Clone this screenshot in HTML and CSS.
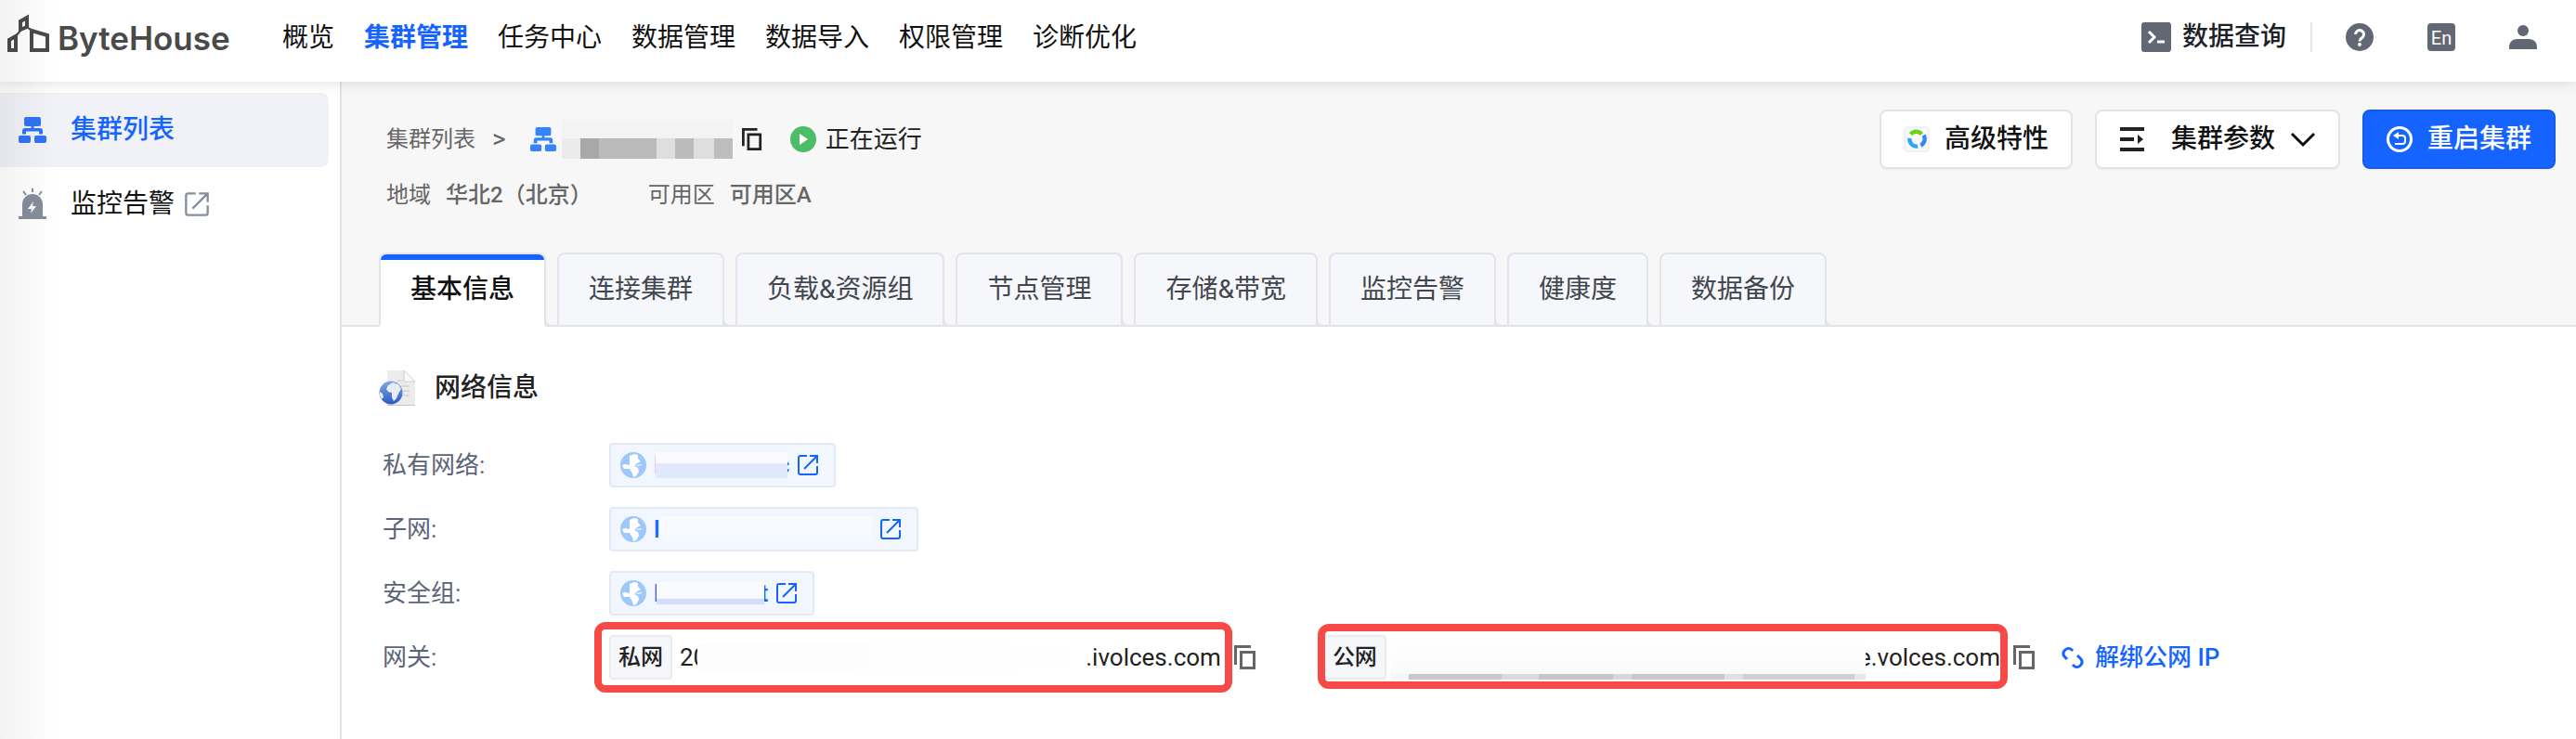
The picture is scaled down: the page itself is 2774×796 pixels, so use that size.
FILE: index.html
```html
<!DOCTYPE html>
<html lang="zh-CN">
<head>
  <meta charset="UTF-8">
  <meta name="viewport" content="width=device-width, initial-scale=1.0">
  <title>ByteHouse</title>
  <link rel="stylesheet" href="styles.css">
</head>
<body>
  <svg class="sprite" aria-hidden="true">
    <symbol id="i-cluster" viewBox="0 0 30 30">
      <rect x="6" y="1" width="18" height="10" rx="2"/>
      <path d="M13.500 10h3v3h6.500a3 3 0 0 1 3 3v3.500h-4V16.500H8v3H4V16a3 3 0 0 1 3-3h6.500z"/>
      <rect x="0" y="21" width="13" height="8" rx="2"/>
      <rect x="17" y="21" width="13" height="8" rx="2"/>
    </symbol>
    <symbol id="i-external" viewBox="0 0 24 24">
      <path d="M11 2H4a2 2 0 0 0-2 2v16a2 2 0 0 0 2 2h16a2 2 0 0 0 2-2v-7M14 2h8v8M22 2 8 16" fill="none" stroke="currentColor" stroke-width="2"/>
    </symbol>
    <symbol id="i-copy" viewBox="0 0 24 26">
      <path d="M1.500 21V1.500H18" fill="none" stroke="currentColor" stroke-width="3"/>
      <path d="M7.500 7.500h14v17h-14z" fill="none" stroke="currentColor" stroke-width="3"/>
    </symbol>
    <symbol id="i-globe" viewBox="0 0 28 28">
      <circle cx="14" cy="14" r="14" fill="#9fc8fa"/>
      <path d="M10 4l5-2 4 1v4l3 3-4 2-3 3 4 2 1 4-3 5-3 1-1-4-3-5-6 0-2-4 3-1 5 1v-5z" fill="#fff"/>
      <path d="M17 14l6-1v1l-5 1z" fill="#fff"/>
    </symbol>
  </svg>

  <header class="topbar">
    <a class="logo" href="#">
      <svg width="48" height="50" viewBox="0 0 48 50" fill="none" stroke="#4a4a4a" stroke-width="4">
        <path d="M16 21v-9l7-4v10z"/>
        <path d="M28 43V22l17 5v16z"/>
        <path d="M4 43V32l7-4v15z"/>
        <path d="M11 28l5-6M23 18l5 4" stroke-width="2"/>
      </svg>
      <span>ByteHouse</span>
    </a>
    <nav class="nav">
      <a href="#">概览</a>
      <a class="active" href="#">集群管理</a>
      <a href="#">任务中心</a>
      <a href="#">数据管理</a>
      <a href="#">数据导入</a>
      <a href="#">权限管理</a>
      <a href="#">诊断优化</a>
    </nav>
    <div class="tools">
      <a class="query" href="#">
        <svg width="32" height="32" viewBox="0 0 32 32">
          <rect width="32" height="32" rx="3" fill="#616773"/>
          <path d="M8 10l6 6-6 6" fill="none" stroke="#fff" stroke-width="3"/>
          <path d="M17 21h8" stroke="#fff" stroke-width="3"/>
        </svg>
        数据查询
      </a>
      <button class="icon-btn" aria-label="帮助">
        <svg width="30" height="30" viewBox="0 0 30 30">
          <circle cx="15" cy="15" r="15" fill="#616773"/>
          <path d="M10.500 12a4.500 4.500 0 1 1 7 3.800c-1.700 1.200-2.500 1.800-2.500 3.700" fill="none" stroke="#fff" stroke-width="3"/>
          <circle cx="15" cy="23" r="2" fill="#fff"/>
        </svg>
      </button>
      <button class="icon-btn"><span class="lang">En</span></button>
      <button class="icon-btn" aria-label="用户">
        <svg width="30" height="28" viewBox="0 0 30 28" fill="#616773">
          <circle cx="15" cy="7" r="6"/>
          <path d="M0 27v-2c0-6 4-9 9-9h12c5 0 9 3 9 9v2z"/>
        </svg>
      </button>
    </div>
  </header>

  <div class="layout">
    <aside class="sidebar">
      <a class="side-item active" href="#">
        <svg class="side-icon" width="30" height="30"><use href="#i-cluster"/></svg>
        集群列表
      </a>
      <a class="side-item" href="#">
        <svg class="side-icon" width="30" height="34" viewBox="0 0 30 34">
          <path d="M4 30V17a11 11 0 0 1 22 0v13h4v3H0v-3z"/>
          <path d="M15 0v4M5 3l3 4M25 3l-3 4" stroke="#868e9b" stroke-width="2"/>
          <path d="M16 14l-6 8h4l-1 5 6-8h-4z" fill="#fff"/>
        </svg>
        监控告警
        <svg class="side-ext" width="28" height="28"><use href="#i-external"/></svg>
      </a>
    </aside>

    <main class="main">
      <section class="page-head">
        <div class="head-row">
          <div>
            <div class="crumbs">
              <a class="crumb" href="#">集群列表</a>
              <span class="sep">&gt;</span>
              <svg class="cluster-icon" width="28" height="28"><use href="#i-cluster"/></svg>
              <span class="mask mask-name"></span>
              <button class="copy dark" aria-label="复制"><svg width="22" height="24"><use href="#i-copy"/></svg></button>
              <span class="status">
                <svg width="28" height="28" viewBox="0 0 28 28">
                  <circle cx="14" cy="14" r="14" fill="#4dbd68"/>
                  <path d="M10 8l9 6-9 6z" fill="#fff"/>
                </svg>
                正在运行
              </span>
            </div>
            <dl class="meta">
              <dt>地域</dt><dd>华北2（北京）</dd>
              <dt>可用区</dt><dd>可用区A</dd>
            </dl>
          </div>
          <div class="actions">
            <button class="btn">
              <svg width="28" height="28" viewBox="0 0 26 26">
                <rect x="1" y="1" width="24" height="24" rx="3" fill="#f8f8fa" stroke="#e6e7ea"/>
                <g fill="none" stroke-width="4">
                  <path d="M7 8a7 7 0 0 1 11 0" stroke="#6bd413"/>
                  <path d="M20 9a7 7 0 0 1-3 10" stroke="#2f86f6"/>
                  <path d="M6 12a7 7 0 0 0 8 8" stroke="#25a8f5"/>
                </g>
              </svg>
              高级特性
            </button>
            <button class="btn btn-menu">
              <svg width="28" height="28" viewBox="0 0 28 28" fill="#222">
                <path d="M1 1h26v4H1zM1 12h15v4H1zM1 23h26v4H1zM20 9l6 5-6 5z"/>
              </svg>
              集群参数
              <svg class="chevron" width="28" height="18" viewBox="0 0 28 18"><path d="M2 3l12 12L26 3" fill="none" stroke="#111" stroke-width="3"/></svg>
            </button>
            <button class="btn btn-primary">
              <svg width="28" height="28" viewBox="0 0 28 28" fill="none" stroke="#fff">
                <circle cx="14" cy="14" r="12.500" stroke-width="3"/>
                <path d="M9 10h8a3 3 0 0 1 3 3v3a3 3 0 0 1-3 3H9" stroke-width="2"/>
                <path d="M7 10l6-4v8z" fill="#fff" stroke="none"/>
              </svg>
              重启集群
            </button>
          </div>
        </div>

        <div class="tabs" role="tablist">
          <button class="tab active" role="tab" aria-selected="true">基本信息</button>
          <button class="tab" role="tab">连接集群</button>
          <button class="tab" role="tab">负载&amp;资源组</button>
          <button class="tab" role="tab">节点管理</button>
          <button class="tab" role="tab">存储&amp;带宽</button>
          <button class="tab" role="tab">监控告警</button>
          <button class="tab" role="tab">健康度</button>
          <button class="tab" role="tab">数据备份</button>
        </div>
      </section>

      <section class="content">
        <h2 class="title">
          <svg width="40" height="40" viewBox="0 0 40 40">
            <defs>
              <linearGradient id="ball" x1="0" y1="0" x2="0" y2="1"><stop offset="0" stop-color="#7fa8e6"/><stop offset="1" stop-color="#2a5cc0"/></linearGradient>
            </defs>
            <path d="M9 1h18l12 12v25H9z" fill="#ececec"/>
            <path d="M9 38h30v1H9z" fill="#c4c4c4"/>
            <path d="M27 1l12 12H27z" fill="#fafafa" stroke="#cfcfcf"/>
            <path d="M20 12h5M20 18h13M20 23h13M20 28h13" stroke="#dadada" stroke-width="2"/>
            <circle cx="13" cy="25" r="12.500" fill="url(#ball)"/>
            <path d="M10 17l5-3 6 2 3 5-3 5-2 5-3 3-2-4v-5l-4-1-2-3z" fill="#e8edf5"/>
            <path d="M1 24l3 2 1 4-2 2-2-4z" fill="#e8edf5"/>
          </svg>
          网络信息
        </h2>

        <dl class="info">
          <dt>私有网络:</dt>
          <dd>
            <a class="chip" href="#">
              <svg width="28" height="28"><use href="#i-globe"/></svg>
              <span class="masked">l<span class="mask mask-vpc"></span>c</span>
              <svg class="ext" width="24" height="24"><use href="#i-external"/></svg>
            </a>
          </dd>
          <dt>子网:</dt>
          <dd>
            <a class="chip" href="#">
              <svg width="28" height="28"><use href="#i-globe"/></svg>
              <span class="masked">l<span class="mask mask-subnet"></span></span>
              <svg class="ext" width="24" height="24"><use href="#i-external"/></svg>
            </a>
          </dd>
          <dt>安全组:</dt>
          <dd>
            <a class="chip" href="#">
              <svg width="28" height="28"><use href="#i-globe"/></svg>
              <span class="masked">b<span class="mask mask-group"></span>t</span>
              <svg class="ext" width="24" height="24"><use href="#i-external"/></svg>
            </a>
          </dd>
          <dt>网关:</dt>
          <dd class="gateways">
            <span class="address private">
              <span class="tag">私网</span>
              <span class="host">20<span class="mask mask-private"></span>.ivolces.com</span>
            </span>
            <button class="copy" aria-label="复制私网地址"><svg width="24" height="26"><use href="#i-copy"/></svg></button>
            <span class="address public">
              <span class="tag">公网</span>
              <span class="host"><span class="mask mask-public"></span>e.volces.com</span>
            </span>
            <button class="copy" aria-label="复制公网地址"><svg width="24" height="26"><use href="#i-copy"/></svg></button>
            <a class="unbind" href="#">
              <svg width="24" height="24" viewBox="0 0 24 24" fill="none" stroke="currentColor" stroke-width="3">
                <path d="M12 5l-1-1a5 5 0 0 0-7 0L3 5a5 5 0 0 0 0 6l3 3"/>
                <path d="M12 20l1 1a5 5 0 0 0 7 0l1-1a5 5 0 0 0 0-6l-4-4"/>
              </svg>
              解绑公网 IP
            </a>
          </dd>
        </dl>
      </section>
    </main>
  </div>
</body>
</html>
```

FILE: styles.css
```css
* {
  box-sizing: border-box;
}
body {
  margin: 0;
  min-height: 100vh;
  display: flex;
  flex-direction: column;
  font-family: Roboto, "Noto Sans CJK SC", sans-serif;
  font-size: 26px;
  line-height: 40px;
  color: #222;
  background: #fff;
}
/* soft shade along the left edge of the window */
body::before {
  content: "";
  position: absolute;
  left: 0;
  top: 0;
  bottom: 0;
  width: 60px;
  background: linear-gradient(to right, rgba(0,0,0,0.05), rgba(0,0,0,0));
  pointer-events: none;
  z-index: 3;
}
a {
  color: inherit;
  text-decoration: none;
}
button {
  font: inherit;
  color: inherit;
  border: none;
  background: none;
  padding: 0;
  cursor: pointer;
}
svg {
  display: block;
  flex: none;
}
.sprite {
  position: absolute;
  width: 0;
  height: 0;
}
dl, dd, h2 {
  margin: 0;
}

/* top bar */
.topbar {
  display: flex;
  align-items: center;
  height: 88px;
  padding: 0 42px 8px 6px;
  background: #fff;
  box-shadow: 0 0 16px rgba(0,0,0,0.14);
  position: relative;
  z-index: 2;
}
.logo {
  display: flex;
  align-items: center;
  gap: 8px;
  width: 298px;
  font-family: Inter, sans-serif;
  font-size: 35px;
  font-weight: 600;
  color: #4a4a4a;
}
.logo svg {
  margin-bottom: 8px;
}
.logo span {
  padding-top: 2px;
}
.nav {
  display: flex;
  gap: 32px;
  padding-top: 2px;
  font-size: 28px;
  color: #111;
}
.nav .active {
  color: #1664ff;
  font-weight: 700;
}
.tools {
  display: flex;
  align-items: center;
  gap: 58px;
  margin-left: auto;
}
.query {
  display: flex;
  align-items: center;
  gap: 12px;
  padding-right: 26px;
  margin-right: -22px;
  font-size: 28px;
  font-weight: 500;
  line-height: 30px;
  color: #1d2129;
  border-right: 2px solid #e5e6eb;
}
.lang {
  display: block;
  width: 30px;
  height: 30px;
  border-radius: 4px;
  background: #616773;
  color: #fff;
  font-size: 20px;
  line-height: 32px;
  text-align: center;
}

.layout {
  display: flex;
  flex: 1;
}

/* sidebar */
.sidebar {
  width: 368px;
  padding: 12px 12px 0 0;
  border-right: 2px solid #e3e4e8;
}
.side-item {
  display: flex;
  align-items: center;
  height: 80px;
  padding-left: 20px;
  font-size: 28px;
  color: #111;
  border-radius: 0 8px 8px 0;
}
.side-item.active {
  background: #f0f2f7;
  color: #1664ff;
  font-weight: 500;
}
.side-icon {
  margin-right: 26px;
  fill: #868e9b;
}
.side-item.active .side-icon {
  fill: #2f73f5;
}
.side-ext {
  margin-left: 10px;
  color: #868e9b;
}

/* page head */
.main {
  flex: 1;
}
.page-head {
  padding: 30px 22px 0 40px;
  background: #f7f7f7;
  border-bottom: 2px solid #e3e4ea;
}
.head-row {
  display: flex;
  justify-content: space-between;
  align-items: flex-start;
}
.crumbs {
  display: flex;
  align-items: center;
  height: 64px;
  padding-left: 8px;
}
.crumb {
  font-size: 24px;
  color: #666;
}
.sep {
  margin: 0 26px 0 18px;
  font-size: 28px;
  color: #666;
}
.cluster-icon {
  fill: #3585fa;
}
.mask {
  display: block;
  flex: none;
  position: relative;
  z-index: 1;
}
.mask-name {
  width: 184px;
  height: 42px;
  margin: 0 10px 0 6px;
  background:
    linear-gradient(#f3f3f3, #f3f3f3) 0 0 / 100% 20px no-repeat,
    linear-gradient(to right, #ebebeb 0 20px, #a8a8a8 20px 40px, #bababa 40px 102px, #dedede 102px 122px, #babcba 122px 142px, #dedede 142px 164px, #bdbdbd 164px);
}
.copy {
  color: #666;
}
.copy.dark {
  color: #222;
}
.status {
  display: flex;
  align-items: center;
  gap: 10px;
  margin-left: 30px;
}
.meta {
  display: flex;
  margin-top: 8px;
  padding-left: 8px;
  font-size: 24px;
  color: #666;
}
.meta dd {
  margin: 0 60px 0 16px;
  font-weight: 500;
}
.actions {
  display: flex;
  gap: 24px;
}
.btn {
  display: flex;
  align-items: center;
  gap: 16px;
  height: 64px;
  padding: 0 24px;
  font-size: 28px;
  font-weight: 500;
  color: #111;
  background: #fff;
  border: 2px solid #e3e3e3;
  border-radius: 8px;
  box-shadow: 0 2px 2px rgba(0,0,0,0.03);
}
.btn-menu {
  gap: 28px;
}
.chevron {
  margin-left: -12px;
}
.btn-primary {
  color: #fff;
  background: #1664ff;
  border-color: #165be0;
}

/* tabs */
.tabs {
  display: flex;
  gap: 12px;
  margin-top: 42px;
  margin-bottom: -2px;
}
.tab {
  position: relative;
  height: 80px;
  padding: 0 32px;
  font-size: 28px;
  color: #42464e;
  background: #f6f7fa;
  border: 2px solid #e3e4ea;
  border-radius: 8px 8px 0 0;
}
.tab.active {
  color: #111;
  font-weight: 500;
  background: #fff;
  border-bottom-color: #fff;
}
.tab.active::before {
  content: "";
  position: absolute;
  left: 0;
  right: 0;
  top: 0;
  height: 10px;
  border-top: 6px solid #1664ff;
  border-radius: 6px 6px 0 0;
}
/* rounded foot between two neighbouring tabs */
.tab::after {
  content: "";
  position: absolute;
  left: 100%;
  bottom: -2px;
  width: 16px;
  height: 12px;
  background: #f7f7f7;
  border: 2px solid #e3e4ea;
  border-top: none;
  border-radius: 0 0 8px 8px;
}
.tab:last-child::after {
  border-right: none;
  border-bottom-right-radius: 0;
}

/* network info */
.content {
  padding: 44px 40px;
}
.title {
  display: flex;
  align-items: center;
  gap: 20px;
  font-size: 28px;
  font-weight: 500;
  line-height: 44px;
}
.info {
  display: grid;
  grid-template-columns: 244px 1fr;
  row-gap: 21px;
  align-items: center;
  margin-top: 37px;
  padding-left: 4px;
}
.info dt {
  color: #5c6478;
}
.info dd {
  display: flex;
  align-items: center;
  height: 48px;
}
.chip {
  display: flex;
  align-items: center;
  height: 48px;
  padding: 0 16px 0 10px;
  color: #1664ff;
  background: #f2f7ff;
  border: 2px solid #e4eaf4;
  border-radius: 4px;
}
.masked {
  display: flex;
  align-items: center;
  margin: 0 8px;
  font-weight: 500;
}
.mask-vpc {
  width: 142px;
  height: 28px;
  margin: 0 -11px 0 -5px;
  background: linear-gradient(#fcfdff, #f8faff 12px, #e1e7fd 12px);
}
.mask-subnet {
  width: 228px;
  height: 28px;
  background: linear-gradient(#f9fbfe, #f5f9ff);
}
.mask-group {
  width: 116px;
  height: 24px;
  margin: 0 -4px 0 -12px;
  background: linear-gradient(#f9fbfe, #f8faff 18px, #d5ddfd 18px);
}
.address {
  position: relative;
  display: flex;
  align-items: center;
  gap: 8px;
  margin-right: 14px;
}
.tag {
  height: 48px;
  padding: 0 8px;
  line-height: 44px;
  font-size: 24px;
  font-weight: 500;
  background: #f6f7fa;
  border: 2px solid #ebebeb;
  border-radius: 4px;
}
.host {
  display: flex;
  align-items: center;
}
/* red frame round an address */
.address::after {
  content: "";
  position: absolute;
  z-index: 2;
  border: 8px solid #f74a46;
  border-radius: 12px;
  pointer-events: none;
}
.private::after {
  inset: -14px -12px -14px -16px;
}
.public::after {
  inset: -12px -8px -10px -6px;
}
.mask-private {
  width: 418px;
  height: 28px;
  margin-left: -10px;
  background: linear-gradient(to right, #fcfcfd, #fff);
}
.public {
  margin-left: 72px;
}
.mask-public {
  width: 512px;
  height: 48px;
  margin: 0 -8px 0 -4px;
  background:
    linear-gradient(to right, #f4f6f7 0 20px, #c8c8c8 20px 120px, #dadada 120px 160px, #c6c6c6 160px 240px, #d8d8d8 240px 260px, #c8c8c8 260px 360px, #e0e0e0 360px 380px, #cfcfcf 380px 500px, #e6e6e6 500px) 0 100% / 100% 6px no-repeat,
    linear-gradient(#fff, #fafafa);
}
.unbind {
  display: flex;
  align-items: center;
  gap: 12px;
  margin-left: 28px;
  font-weight: 500;
  color: #1664ff;
}
```
